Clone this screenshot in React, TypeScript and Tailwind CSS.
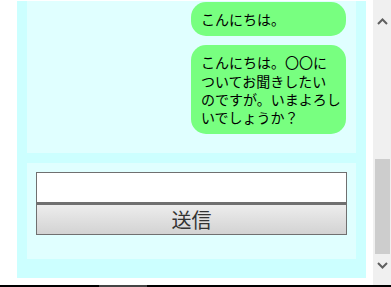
import React from "react";

const Bubble = ({ lines }: { lines: string[] }) => (
  <div className="w-[155px] rounded-[15px] bg-[#78ff80] px-[10px] py-[8px] text-[14px] leading-[18.3px] text-black whitespace-nowrap">
    {lines.map((l, i) => (
      <div key={i}>{l}</div>
    ))}
  </div>
);

const Chevron = ({ down }: { down?: boolean }) => (
  <svg width="11" height="7" viewBox="0 0 11 7" className={down ? "rotate-180" : ""}>
    <path d="M1 6 L5.5 1.5 L10 6" fill="none" stroke="#606060" strokeWidth="2" />
  </svg>
);

export default function App() {
  return (
    <div
      className="flex h-[287px] w-[391px] flex-col overflow-hidden bg-white"
      style={{ fontFamily: '"Noto Sans CJK JP", "Noto Sans", sans-serif' }}
    >
      <div className="flex h-[285px]">
        {/* page */}
        <div className="flex-1 pl-[17px] pt-[1px]">
          <div className="w-[349px] bg-[#ccffff] px-[10px] pb-[19px]">
            {/* messages */}
            <div className="flex h-[152px] flex-col items-end gap-[9px] bg-[#e0ffff] pr-[10px] pt-[1px]">
              <Bubble lines={["こんにちは。"]} />
              <Bubble
                lines={[
                  "こんにちは。〇〇に",
                  "ついてお聞きしたい",
                  "のですが。いまよろし",
                  "いでしょうか？",
                ]}
              />
            </div>
            {/* form */}
            <div className="mt-[10px] h-[96px] bg-[#e0ffff] p-[9px]">
              <input
                type="text"
                className="block h-[31px] w-full border border-[#707070] bg-white outline-none"
              />
              <button className="block h-[32px] w-full border border-t-2 border-[#707070] bg-gradient-to-b from-[#ededed] to-[#d3d3d3] text-[20px] leading-none text-[#333]">
                送信
              </button>
            </div>
          </div>
        </div>
        {/* scrollbar */}
        <div className="flex w-[18px] flex-col items-center bg-[#f0f0f0]">
          <div className="mt-[18px]">
            <Chevron />
          </div>
          <div className="mt-[134px] h-[95px] w-[15px] bg-[#cdcdcd]" />
          <div className="mt-[8px]">
            <Chevron down />
          </div>
        </div>
      </div>
      <div className="flex h-[2px] bg-black">
        <div className="ml-[99px] w-[48px] bg-[#444]" />
      </div>
    </div>
  );
}
